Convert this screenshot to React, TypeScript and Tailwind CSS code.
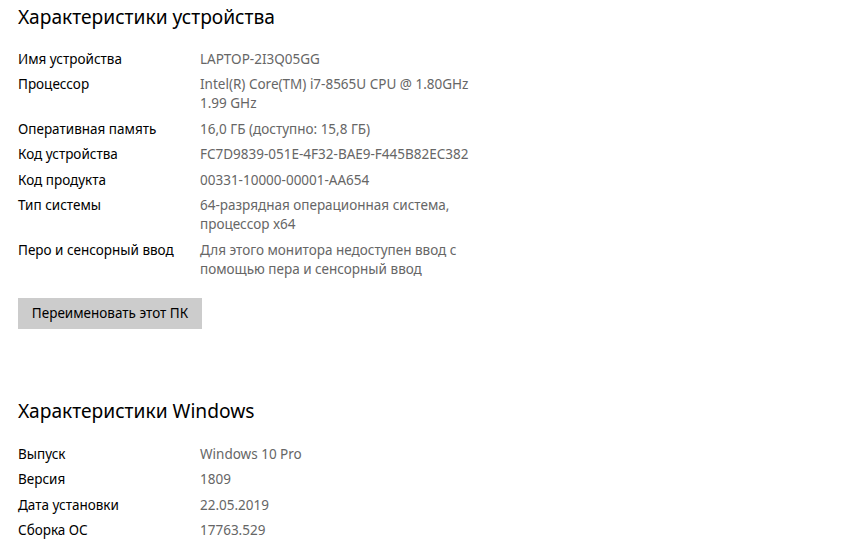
import React from "react";

const font = { fontFamily: '"Noto Sans", "Open Sans", sans-serif' };

type Row = { label: string; value: string[] };

const device: Row[] = [
  { label: "Имя устройства", value: ["LAPTOP-2I3Q05GG"] },
  { label: "Процессор", value: ["Intel(R) Core(TM) i7-8565U CPU @ 1.80GHz", "1.99 GHz"] },
  { label: "Оперативная память", value: ["16,0 ГБ (доступно: 15,8 ГБ)"] },
  { label: "Код устройства", value: ["FC7D9839-051E-4F32-BAE9-F445B82EC382"] },
  { label: "Код продукта", value: ["00331-10000-00001-AA654"] },
  { label: "Тип системы", value: ["64-разрядная операционная система,", "процессор x64"] },
  { label: "Перо и сенсорный ввод", value: ["Для этого монитора недоступен ввод с", "помощью пера и сенсорный ввод"] },
];

const windows: Row[] = [
  { label: "Выпуск", value: ["Windows 10 Pro"] },
  { label: "Версия", value: ["1809"] },
  { label: "Дата установки", value: ["22.05.2019"] },
  { label: "Сборка ОС", value: ["17763.529"] },
];

function Rows({ rows }: { rows: Row[] }) {
  return (
    <div className="flex flex-col gap-[6.5px] text-[13.5px] leading-[19px]">
      {rows.map((r) => (
        <div key={r.label} className="flex">
          <div className="w-[182px] shrink-0 text-black">{r.label}</div>
          <div className="text-[#666666]">
            {r.value.map((v) => (
              <div key={v}>{v}</div>
            ))}
          </div>
        </div>
      ))}
    </div>
  );
}

export default function App() {
  return (
    <div className="w-[850px] h-[545px] bg-white overflow-hidden pl-[18px] pt-[3px]" style={font}>
      <h1 className="text-[19.2px] leading-[28px] text-black">Характеристики устройства</h1>
      <div className="mt-[18.8px]">
        <Rows rows={device} />
      </div>
      <button className="mt-[19px] w-[184px] h-[31px] bg-[#cccccc] text-black text-[13.5px] text-center">
        Переименовать этот ПК
      </button>
      <h1 className="mt-[68.5px] text-[19.2px] leading-[28px] text-black">Характеристики Windows</h1>
      <div className="mt-[19.5px]">
        <Rows rows={windows} />
      </div>
    </div>
  );
}
